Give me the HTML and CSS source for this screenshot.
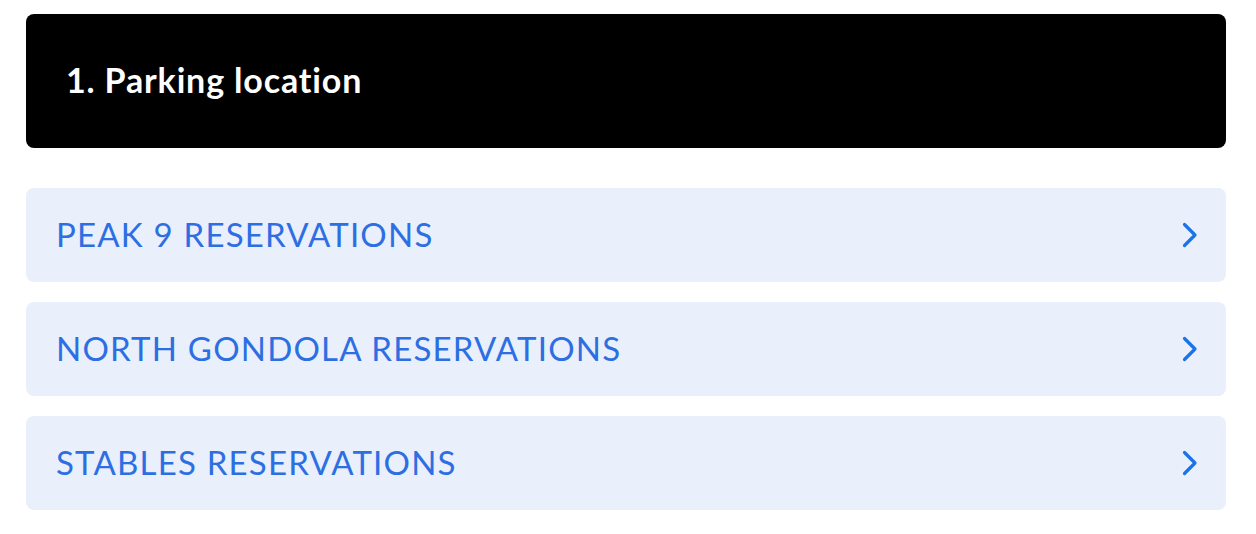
FILE: index.html
```html
<!DOCTYPE html>
<html>
<head>
<meta charset="utf-8">
<link rel="stylesheet" href="styles.css">
</head>
<body>
<div class="page">
  <div class="header"><h1 class="title">1. Parking location</h1></div>
  <div class="list">
    <a class="row" href="#"><span class="label">PEAK 9 RESERVATIONS</span><svg class="chev" viewBox="0 0 16 26" width="16" height="26"><path d="M2.5 2.5 L13 13 L2.5 23.5" fill="none" stroke="currentColor" stroke-width="3.2" stroke-linecap="round" stroke-linejoin="round"/></svg></a>
    <a class="row" href="#"><span class="label">NORTH GONDOLA RESERVATIONS</span><svg class="chev" viewBox="0 0 16 26" width="16" height="26"><path d="M2.5 2.5 L13 13 L2.5 23.5" fill="none" stroke="currentColor" stroke-width="3.2" stroke-linecap="round" stroke-linejoin="round"/></svg></a>
    <a class="row" href="#"><span class="label">STABLES RESERVATIONS</span><svg class="chev" viewBox="0 0 16 26" width="16" height="26"><path d="M2.5 2.5 L13 13 L2.5 23.5" fill="none" stroke="currentColor" stroke-width="3.2" stroke-linecap="round" stroke-linejoin="round"/></svg></a>
  </div>
</div>
</body>
</html>
```
FILE: styles.css
```css
html, body { margin: 0; padding: 0; background: #fff; }
body { font-family: Lato, "Noto Sans", sans-serif; font-variant-ligatures: none; }
.page { padding: 14px 30px 0 26px; display: flex; flex-direction: column; gap: 40px; }
.header { background: #000; border-radius: 8px; height: 134px; box-sizing: border-box; display: flex; align-items: center; padding: 0 0 4px 40px; }
.title { margin: 0; color: #fff; font-size: 34px; font-weight: 700; letter-spacing: 0.85px; }
.list { display: flex; flex-direction: column; gap: 20px; }
.row { display: flex; align-items: center; justify-content: space-between; height: 94px; box-sizing: border-box; background: #e9effb; border-radius: 8px; padding: 0 28px 2px 30px; text-decoration: none; }
.label { color: #2d6fe3; font-size: 33px; font-weight: 400; letter-spacing: 1.2px; }
.chev { color: #1a73e8; margin-top: 2px; }
```
